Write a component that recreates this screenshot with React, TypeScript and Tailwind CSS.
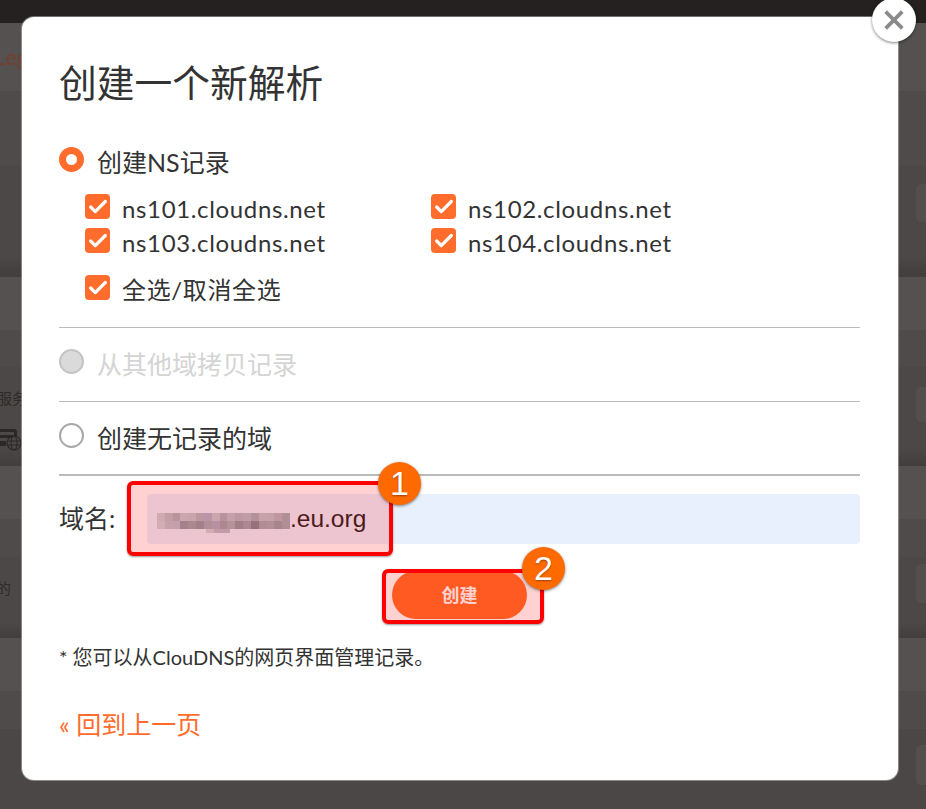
import { Check, X } from "lucide-react";

const font = { fontFamily: '"Lato", "Noto Sans CJK SC", sans-serif' };

const mosaic = [
  "bg-[#c4cfd8]", "bg-[#b4c2cc]", "bg-[#a8b4c0]", "bg-[#c0ccd6]", "bg-[#bcc8d2]", "bg-[#acbac6]", "bg-[#a8b6cc]", "bg-[#c0cad6]",
  "bg-[#a8b2c0]", "bg-[#b8c2ce]", "bg-[#b0bac8]", "bg-[#b4bece]", "bg-[#a4b2be]", "bg-[#bcc6d0]", "bg-[#b8c4ce]", "bg-[#b0b8c4]", "bg-[#a0aeb8]",
  "bg-[#c8d4dc]", "bg-[#b8c6d0]", "bg-[#b8c2d4]", "bg-[#909faa]", "bg-[#98a6b0]", "bg-[#8e9ca6]", "bg-[#a0aeba]", "bg-[#a8b0c2]",
  "bg-[#9ca4b2]", "bg-[#a4b2bc]", "bg-[#8c9aa6]", "bg-[#98a6b2]", "bg-[#7e8c98]", "bg-[#a0aab6]", "bg-[#a4aeba]", "bg-[#94a2ae]", "bg-[#a0acb8]",
];

function Box({ label }: { label: string }) {
  return (
    <label className="flex items-start gap-[12px] text-[24px] leading-[34px] tracking-[0.65px] text-[#333]">
      <span className="mt-[2px] flex h-[25px] w-[25px] items-center justify-center rounded-[4px] bg-[#ff6c2c]">
        <Check size={22} strokeWidth={3.5} className="text-white" />
      </span>
      {label}
    </label>
  );
}

function Radio({ label, state }: { label: string; state: "on" | "off" | "disabled" }) {
  const ring =
    state === "on"
      ? "border-[7px] border-[#ff6c2c] bg-white"
      : state === "disabled"
        ? "border-2 border-[#c4c4c4] bg-[#dadada]"
        : "border-2 border-[#a8a8a8] bg-white";
  return (
    <div className={`flex items-start gap-[13px] text-[25px] leading-[34px] ${state === "disabled" ? "text-[#d4d4d4]" : "text-[#333]"}`}>
      <span className={`mt-[2px] h-[25px] w-[25px] rounded-full ${ring}`} />
      {label}
    </div>
  );
}

function Badge({ n, className }: { n: number; className: string }) {
  return (
    <span
      className={`absolute flex h-[43px] w-[43px] items-center justify-center rounded-full bg-[#ff6a00] text-[34px] text-white shadow-[0_1px_3px_rgba(0,0,0,0.5)] [text-shadow:0_1px_2px_rgba(0,0,0,0.4)] ${className}`}
      style={{ fontFamily: '"Liberation Sans", sans-serif' }}
    >
      {n}
    </span>
  );
}

function SideButton({ className }: { className: string }) {
  return <div className={`ml-auto w-[10px] rounded-l-[5px] bg-[#534f4e] ${className}`} />;
}

function Backdrop() {
  const light = "bg-[#555150]";
  const mid = "bg-[#4f4b4a]";
  const dark = "bg-linear-to-b from-[#4c4847] from-80% to-[#423e3d]";
  return (
    <div className="flex flex-col">
      <div className="h-[23px] bg-[#252120]" />
      <div className={`flex h-[68px] items-center ${light}`}>
        <span className="-ml-[4px] text-[21px] text-[#74402e]">Leg</span>
      </div>
      <div className={`h-[75px] ${mid}`} />
      <div className={`h-[111px] pt-[18px] ${dark}`}>
        <SideButton className="h-[38px]" />
      </div>
      <div className={`h-[53px] ${light}`} />
      <div className={`h-[37px] ${mid}`} />
      <div className={`relative h-[99px] pt-[20px] ${dark}`}>
        <SideButton className="h-[35px]" />
        <span className="absolute -left-[3px] top-[21px] text-[15px] leading-[20px] text-[#2e2b2a]">服务</span>
        <svg className="absolute left-0 top-[60px]" width="22" height="25" viewBox="0 0 22 25" fill="none">
          <path d="M0 2h14a3 3 0 0 1 3 3v5H14V5H0z" fill="#2a2726" />
          <rect x="0" y="8" width="13" height="3" fill="#2a2726" />
          <rect x="0" y="14" width="6" height="5" fill="#2a2726" />
          <circle cx="14" cy="16" r="7" stroke="#2a2726" strokeWidth="1.2" />
          <ellipse cx="14" cy="16" rx="3" ry="7" stroke="#2a2726" />
          <path d="M7 14h14M7 18h14" stroke="#2a2726" />
        </svg>
      </div>
      <div className={`h-[53px] ${light}`} />
      <div className={`h-[38px] ${mid}`} />
      <div className={`relative h-[81px] pt-[7px] ${dark}`}>
        <SideButton className="h-[39px]" />
        <span className="absolute -left-[4px] top-[20px] text-[15px] leading-[22px] text-[#2e2b2a]">的</span>
      </div>
      <div className={`h-[53px] ${light}`} />
      <div className={`h-[38px] ${mid}`} />
      <div className="h-[80px] bg-[#4b4746] pt-[16px]">
        <SideButton className="h-[40px]" />
      </div>
    </div>
  );
}

export default function App() {
  return (
    <div className="relative h-[809px] w-[926px] overflow-hidden bg-[#4b4746]" style={font}>
      <Backdrop />

      <div className="absolute left-[22px] top-[17px] h-[763px] w-[876px] rounded-[12px] bg-white pl-[37px] pr-[38px] pt-[39px] shadow-[0_0_0_1px_rgba(255,255,255,0.35)]">
        <h1 className="text-[37.75px] leading-[54px] font-normal text-[#333]">创建一个新解析</h1>

        <div className="mt-[35px]">
          <Radio label="创建NS记录" state="on" />
        </div>
        <div className="mt-[13px] ml-[26px] grid grid-cols-[346px_1fr]">
          <Box label="ns101.cloudns.net" />
          <Box label="ns102.cloudns.net" />
          <Box label="ns103.cloudns.net" />
          <Box label="ns104.cloudns.net" />
        </div>
        <div className="mt-[13px] ml-[26px]">
          <Box label="全选/取消全选" />
        </div>
        <div className="mt-[20px] border-t border-[#bbb]" />

        <div className="mt-[19px]">
          <Radio label="从其他域拷贝记录" state="disabled" />
        </div>
        <div className="mt-[20px] border-t border-[#bbb]" />

        <div className="mt-[19px]">
          <Radio label="创建无记录的域" state="off" />
        </div>
        <div className="mt-[19px] border-t-2 border-[#bbb]" />

        <div className="mt-[18px] flex items-center">
          <span className="w-[88px] text-[25px] text-[#333]">域名:</span>
          <div
            className="flex h-[50px] flex-1 items-center rounded-[4px] bg-[#e8f0fe] pl-[10px] text-[24.5px] text-[#222]"
            style={{ fontFamily: '"Liberation Sans", sans-serif' }}
          >
            <span className="relative mt-[3px] grid h-[16px] w-[133px] grid-cols-[repeat(17,1fr)]">
              {mosaic.map((c, i) => (
                <span key={i} className={`h-[8px] ${c}`} />
              ))}
              <span className="absolute left-[49px] top-[16px] h-[4px] w-[8px] bg-[#c8d4dc]" />
              <span className="absolute left-[57px] top-[16px] h-[4px] w-[16px] bg-[#b4bcd0]" />
            </span>
            .eu.org
          </div>
        </div>

        <div className="mt-[27px] flex justify-center">
          <button className="h-[48px] w-[135px] rounded-full bg-[#ff6e2a] text-[18px] font-bold text-white">创建</button>
        </div>

        <p className="mt-[25px] text-[20px] leading-[26px] text-[#333]">* 您可以从ClouDNS的网页界面管理记录。</p>
        <a className="mt-[36px] block text-[25px] leading-[36px] text-[#ff6c2c]">« 回到上一页</a>
      </div>

      {/* highlight boxes drawn over the screenshot */}
      <div className="absolute left-[127px] top-[481px] h-[75px] w-[266px] rounded-[6px] border-[4px] border-[#ff0000] bg-[#ff0000]/18 shadow-[0_1px_2px_rgba(0,0,0,0.4)]" />
      <div className="absolute left-[382px] top-[569px] h-[55px] w-[162px] rounded-[6px] border-[4px] border-[#ff0000] bg-[#ff0000]/18 shadow-[0_1px_2px_rgba(0,0,0,0.4)]" />
      <Badge n={1} className="left-[378px] top-[462px]" />
      <Badge n={2} className="left-[522px] top-[547px]" />

      <button className="absolute left-[872px] top-[-2px] flex h-[44px] w-[44px] items-center justify-center rounded-full bg-white shadow-[0_1px_3px_rgba(0,0,0,0.5)]">
        <X size={28} strokeWidth={3.2} strokeLinecap="square" className="text-[#8a8a8a]" />
      </button>
    </div>
  );
}
